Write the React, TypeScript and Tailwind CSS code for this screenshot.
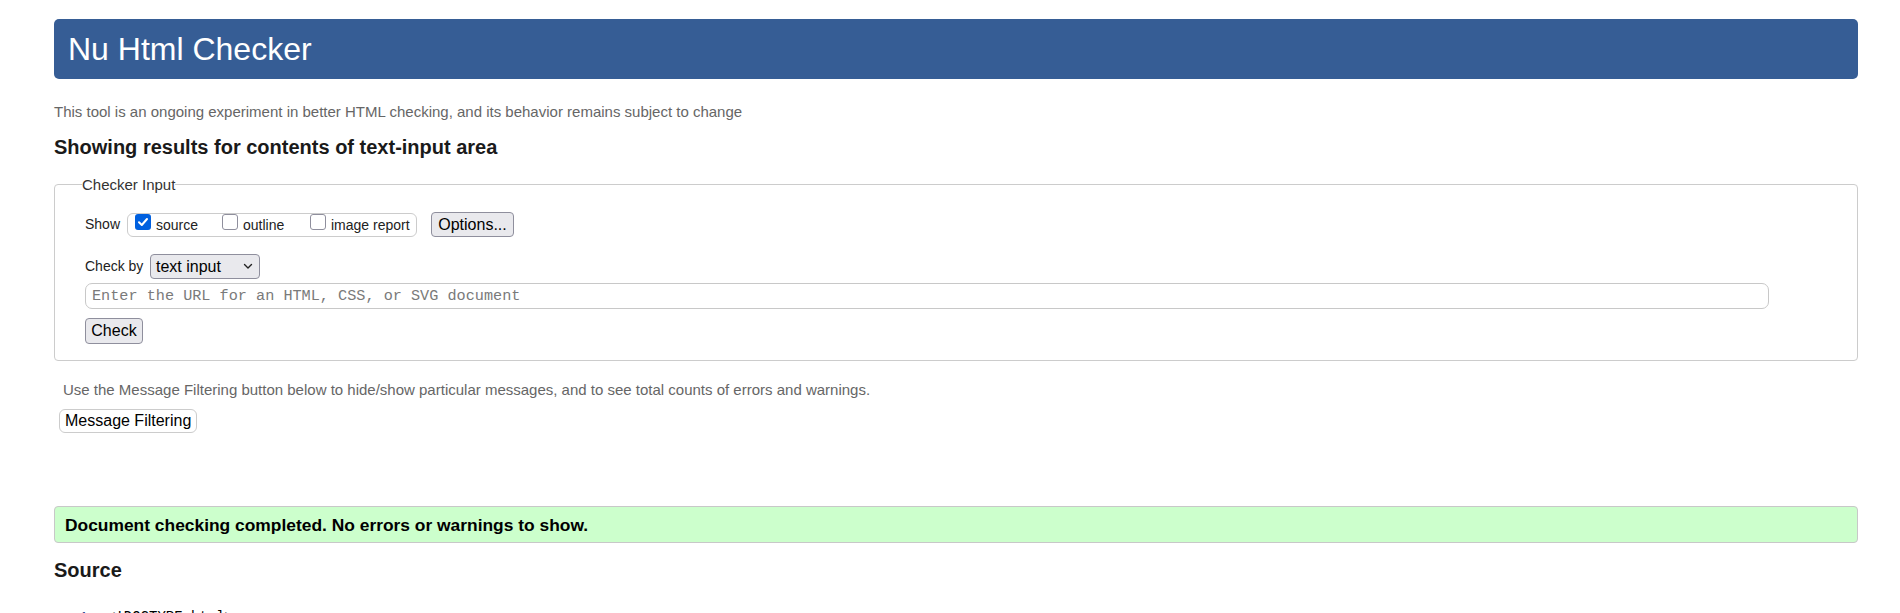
import React from "react";

function Box({ checked, className = "" }: { checked?: boolean; className?: string }) {
  return checked ? (
    <span className={"mb-[5px] flex h-[16px] w-[16px] shrink-0 items-center justify-center rounded-[3px] bg-[#0060df] " + className}>
      <svg width="12" height="12" viewBox="0 0 12 12" fill="none">
        <path d="M2 6.3 L4.8 9 L10 3" stroke="white" strokeWidth="2" strokeLinecap="round" strokeLinejoin="round" />
      </svg>
    </span>
  ) : (
    <span className={"mb-[5px] block h-[16px] w-[16px] shrink-0 rounded-[3px] border border-[#8f8f9d] bg-white " + className} />
  );
}

export default function App() {
  return (
    <div className="min-h-[613px] bg-white pl-[54px] pr-[42px] pt-[19px] font-['Liberation_Sans',Arial,sans-serif] text-[#222]">
      <header className="flex h-[60px] items-center rounded-[5px] bg-[#365d95] pl-[14px]">
        <h1 className="text-[32px] leading-[37px] text-white">Nu Html Checker</h1>
      </header>

      <p className="mt-[25px] text-[15px] leading-[16px] text-[#666]">
        This tool is an ongoing experiment in better HTML checking, and its behavior remains subject to change
      </p>

      <h2 className="mt-[15px] text-[20px] font-bold leading-[24px] text-[#1a1a1a]">
        Showing results for contents of text-input area
      </h2>

      <fieldset className="mt-[17px] rounded-[4px] border border-[#cccccc] pb-[16px] pl-[30px] pr-[88px] pt-[19px]">
        <legend className="ml-[-3px] text-[15px] leading-[17px] text-[#333]">Checker Input</legend>

        <div className="flex h-[25px] items-center whitespace-nowrap text-[14px] text-[#222]">
          <span className="w-[35px] shrink-0">Show</span>
          <div className="ml-[7px] flex h-[24px] shrink-0 items-center rounded-[6px] border border-[#cccccc] px-[7px] leading-[16px]">
            <Box checked />
            <span className="ml-[5px] w-[40px] shrink-0">source</span>
            <Box className="ml-[26px]" />
            <span className="ml-[5px] w-[42px] shrink-0">outline</span>
            <Box className="ml-[25px]" />
            <span className="ml-[5px] w-[78px] shrink-0">image report</span>
          </div>
          <button className="ml-[14px] h-[25px] w-[83px] shrink-0 rounded-[4px] border border-[#8f8f9d] bg-[#e9e9ed] text-[16px] leading-[18px] text-black">
            Options...
          </button>
        </div>

        <div className="mt-[17px] flex h-[25px] items-center whitespace-nowrap text-[14px]">
          <span className="w-[58px] shrink-0">Check by</span>
          <div className="ml-[7px] flex h-[25px] w-[110px] shrink-0 items-center justify-between rounded-[4px] border border-[#8f8f9d] bg-[#e9e9ed] pl-[5px] pr-[6px] text-[16px] text-black">
            <span>text input</span>
            <svg width="10" height="7" viewBox="0 0 10 7" fill="none">
              <path d="M1.5 1.5 L5 5 L8.5 1.5" stroke="#222" strokeWidth="1.4" strokeLinecap="round" strokeLinejoin="round" />
            </svg>
          </div>
        </div>

        <input
          type="text"
          placeholder="Enter the URL for an HTML, CSS, or SVG document"
          className="mt-[4px] block h-[26px] w-full rounded-[7px] border border-[#c8c8c8] bg-white pl-[6px] font-['Liberation_Mono',monospace] text-[15.2px] outline-none placeholder:text-[#7a7a7a]"
        />

        <button className="mt-[9px] block h-[26px] w-[58px] rounded-[4px] border border-[#8f8f9d] bg-[#e9e9ed] text-[16px] leading-[18px] text-black">
          Check
        </button>
      </fieldset>

      <p className="mt-[21px] pl-[9px] text-[15px] leading-[16px] text-[#666]">
        Use the Message Filtering button below to hide/show particular messages, and to see total counts of errors and warnings.
      </p>

      <button className="ml-[5px] mt-[11px] block h-[24px] w-[138px] rounded-[6px] border border-[#cccccc] bg-white pl-[5px] text-left text-[16px] leading-[18px] text-black">
        Message Filtering
      </button>

      <div className="mt-[73px] flex h-[37px] items-center rounded-[4px] border border-[#c8c8c8] bg-[#ccffcc] pl-[10px]">
        <p className="text-[17.4px] font-bold leading-[20px] text-black">
          Document checking completed. No errors or warnings to show.
        </p>
      </div>

      <h2 className="mt-[15px] text-[20px] font-bold leading-[24px] text-[#1a1a1a]">Source</h2>

      <ol className="mt-[27px] pl-[26px] text-[14px] leading-[16px]">
        <li className="flex">
          <span className="w-[27px] text-[#1f3b8a]">1.</span>
          <code className="font-['Liberation_Mono',monospace] text-[14px] text-black">&lt;!DOCTYPE html&gt;</code>
        </li>
      </ol>
    </div>
  );
}
